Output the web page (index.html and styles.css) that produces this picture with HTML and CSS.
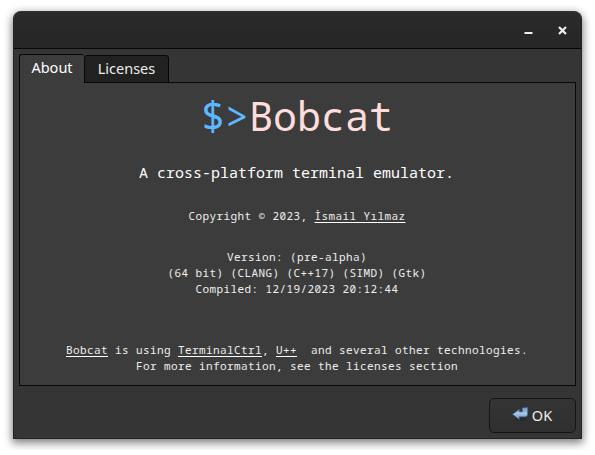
FILE: index.html
```html
<!DOCTYPE html>
<html lang="en">
<head>
<meta charset="utf-8">
<title>About Bobcat</title>
<link rel="stylesheet" href="styles.css">
</head>
<body>
<div class="window">
  <header class="titlebar">
    <svg class="control" width="9" height="9" viewBox="0 0 9 9"><path d="M.5 7h8" stroke="#eeeeec" stroke-width="2"/></svg>
    <svg class="control" width="9" height="9" viewBox="0 0 9 9"><path d="M1 1l7 7M8 1L1 8" stroke="#eeeeec" stroke-width="2.2"/></svg>
  </header>
  <nav class="tabs">
    <div class="tab active">About</div>
    <div class="tab">Licenses</div>
  </nav>
  <main class="pane">
    <h1 class="logo"><span class="prompt">$&gt;</span>Bobcat</h1>
    <p class="tagline">A cross-platform terminal emulator.</p>
    <p class="copyright">Copyright © 2023, <a>İsmail Yılmaz</a></p>
    <p class="version">Version: (pre-alpha)
(64 bit) (CLANG) (C++17) (SIMD) (Gtk)
Compiled: 12/19/2023 20:12:44</p>
    <p class="credits"><a>Bobcat</a> is using <a>TerminalCtrl</a>, <a>U++</a>  and several other technologies.
For more information, see the licenses section</p>
  </main>
  <footer class="actions">
    <button class="ok">
      <svg width="17" height="16" viewBox="0 0 17 16">
        <defs><linearGradient id="arrow" x1="0" y1="0" x2="0" y2="1"><stop offset="0" stop-color="#6f9bcb"/><stop offset=".5" stop-color="#a9c6e8"/><stop offset="1" stop-color="#6d94c4"/></linearGradient></defs>
        <ellipse cx="9" cy="12" rx="6" ry="1.5" fill="#222" opacity=".5"/>
        <path d="M10.3 1L15.6 .4V6.5Q15.6 9.8 13.2 9.8H7.2V12.4L.6 7.2L7.2 2.4V4.8H10.2Q11 4.8 11 4V3.8L10.3 3.6Z" fill="url(#arrow)" stroke="#426b9d" stroke-width=".6"/>
      </svg>
      <span>OK</span>
    </button>
  </footer>
</div>
</body>
</html>
```

FILE: styles.css
```css
* { box-sizing: border-box; }
body { margin: 0; padding: 11px 13px; background: #fff; font-family: "Noto Sans", sans-serif; overflow: hidden; }
.window {
  width: 569px; height: 428px; display: flex; flex-direction: column;
  background: #353535; border: 1px solid #252525; border-top-color: #343434;
  border-radius: 8px 8px 0 0; box-shadow: 0 3px 9px 1px rgba(0,0,0,.5);
}
.titlebar {
  height: 37px; flex: none; display: flex; justify-content: flex-end; align-items: center;
  gap: 25px; padding: 0 14px 0 0; border-bottom: 1px solid #070707;
  background: linear-gradient(#2b2b2b, #262626); border-radius: 7px 7px 0 0;
}
.tabs { display: flex; align-items: flex-end; padding: 5px 5px 0; height: 33px; flex: none; }
.tab {
  height: 28px; width: 85px; margin-bottom: -1px; border: 1px solid #070707; border-radius: 3px 3px 0 0;
  background: #212121; color: #eee; font-size: 14.5px; line-height: 25px; text-align: center;
}
.tab.active {
  height: 29px; width: 65px; border-right: 0; border-bottom: 0;
  background: #3c3c3c; color: #fff; position: relative; z-index: 1;
}
.pane {
  margin: 0 5px; height: 304px; flex: none; border: 1px solid #070707; background: #3c3c3c;
  color: #eee; font-family: "Noto Sans Mono", "DejaVu Sans Mono", monospace;
  font-size: 11px; letter-spacing: .4px; line-height: 16px; text-align: center; white-space: pre;
  overflow: hidden; display: flex; flex-direction: column; padding-right: 1px;
}
.pane p, .logo { margin: 0; }
.logo { font-size: 40px; letter-spacing: 0; font-weight: 400; line-height: 54px; margin-top: 6px; color: #ffdddd; }
.prompt { color: #5cb8ff; }
.pane .tagline { font-size: 15px; letter-spacing: 0; line-height: 22px; color: #fff; margin-top: 18px; padding-right: 1px; }
.pane .copyright { margin-top: 25px; }
.pane .version { margin-top: 25px; }
.pane .credits { margin-top: 45px; }
.pane a { text-decoration: underline 1px #fff; text-underline-offset: 2px; text-decoration-skip-ink: none; }
.actions { flex: 1; display: flex; justify-content: flex-end; padding: 12px 5px 0; }
.ok {
  width: 87px; height: 35px; display: flex; align-items: center; justify-content: center; gap: 3px;
  padding: 0 1px 1px 0; border: 1px solid #151515; border-radius: 5px; color: #eee;
  background: linear-gradient(#343434, #2f2f2f); font: 14.5px/18px "Noto Sans", sans-serif;
}
```
